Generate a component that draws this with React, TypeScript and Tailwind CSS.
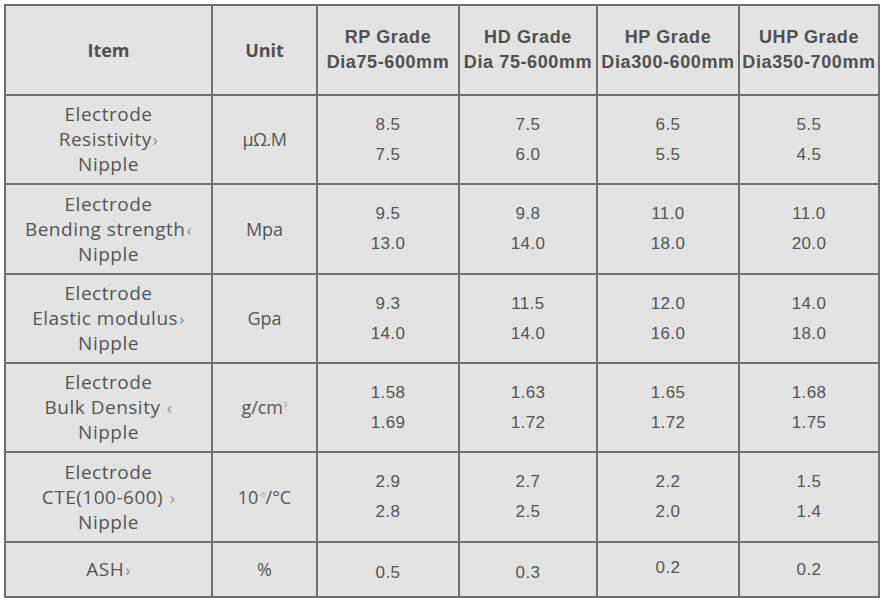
const grades = [
  { name: "RP Grade", dia: "Dia75-600mm" },
  { name: "HD Grade", dia: "Dia 75-600mm" },
  { name: "HP Grade", dia: "Dia300-600mm" },
  { name: "UHP Grade", dia: "Dia350-700mm" },
]

type Row = {
  label: string
  mark: string
  unit: React.ReactNode
  values: string[][]
}

const rows: Row[] = [
  {
    label: "Resistivity",
    mark: "›",
    unit: <span className="tracking-[-0.5px]">μΩ.M</span>,
    values: [["8.5", "7.5"], ["7.5", "6.0"], ["6.5", "5.5"], ["5.5", "4.5"]],
  },
  {
    label: "Bending strength",
    mark: "‹",
    unit: "Mpa",
    values: [["9.5", "13.0"], ["9.8", "14.0"], ["11.0", "18.0"], ["11.0", "20.0"]],
  },
  {
    label: "Elastic modulus",
    mark: "›",
    unit: "Gpa",
    values: [["9.3", "14.0"], ["11.5", "14.0"], ["12.0", "16.0"], ["14.0", "18.0"]],
  },
  {
    label: "Bulk Density ",
    mark: "‹",
    unit: (
      <>
        g/cm<sup className="-top-[7px] text-[8px] text-[#9a9a9a]">3</sup>
      </>
    ),
    values: [["1.58", "1.69"], ["1.63", "1.72"], ["1.65", "1.72"], ["1.68", "1.75"]],
  },
  {
    label: "CTE(100-600) ",
    mark: "›",
    unit: (
      <>
        10<sup className="-top-[7px] text-[8px] text-[#a0a0a0]">-6</sup>/°C
      </>
    ),
    values: [["2.9", "2.8"], ["2.7", "2.5"], ["2.2", "2.0"], ["1.5", "1.4"]],
  },
]

const humanist = "font-['Open_Sans',sans-serif]"
const arial = "font-['Liberation_Sans',Arial,sans-serif]"

const Cell = ({ children, className = "" }: { children: React.ReactNode; className?: string }) => (
  <div className={`flex flex-col items-center justify-center bg-[#e3e3e3] text-center ${className}`}>
    {children}
  </div>
)

const Mark = ({ c }: { c: string }) => (
  <span className="ml-[1px] text-[17px] text-[#8a8a8a]">{c}</span>
)

export default function App() {
  return (
    <div className="min-h-[604px] w-[890px] bg-white pl-[4px] pt-[4px]">
      <div className="grid w-max grid-cols-[205px_103px_140px_136px_140px_138px] grid-rows-[88px_87px_88px_87px_87px_88px_53px] gap-[2px] bg-[#6f6f6f] p-[2px] text-[#555]">
        <Cell className={`${humanist} text-[18px] font-bold text-[#505050]`}>Item</Cell>
        <Cell className={`${humanist} text-[18px] font-bold text-[#505050]`}>Unit</Cell>
        {grades.map((g) => (
          <Cell
            key={g.name}
            className={`${arial} whitespace-nowrap text-[18px] font-bold leading-[25px] tracking-[0.6px] text-[#505050]`}
          >
            <span>{g.name}</span>
            <span>{g.dia}</span>
          </Cell>
        ))}

        {rows.map((r) => (
          <div key={r.label} className="contents">
            <Cell className={`${humanist} text-[19px] leading-[25px] tracking-[0.5px]`}>
              <span>Electrode</span>
              <span className="whitespace-nowrap">
                {r.label}
                <Mark c={r.mark} />
              </span>
              <span>Nipple</span>
            </Cell>
            <Cell className={`${humanist} text-[18px]`}>
              <span>{r.unit}</span>
            </Cell>
            {r.values.map((v, i) => (
              <Cell key={i} className={`${arial} text-[17px] leading-[30px] tracking-[0.4px]`}>
                <span>{v[0]}</span>
                <span>{v[1]}</span>
              </Cell>
            ))}
          </div>
        ))}

        <Cell className={`${humanist} text-[19px] tracking-[0.5px]`}>
          <span>
            ASH
            <Mark c="›" />
          </span>
        </Cell>
        <Cell className={`${humanist} text-[18px]`}>%</Cell>
        <Cell className={`${arial} pt-[6px] text-[17px] tracking-[0.4px]`}>0.5</Cell>
        <Cell className={`${arial} pt-[6px] text-[17px] tracking-[0.4px]`}>0.3</Cell>
        <Cell className={`${arial} pb-[4px] text-[17px] tracking-[0.4px]`}>0.2</Cell>
        <Cell className={`${arial} text-[17px] tracking-[0.4px]`}>0.2</Cell>
      </div>
    </div>
  )
}
